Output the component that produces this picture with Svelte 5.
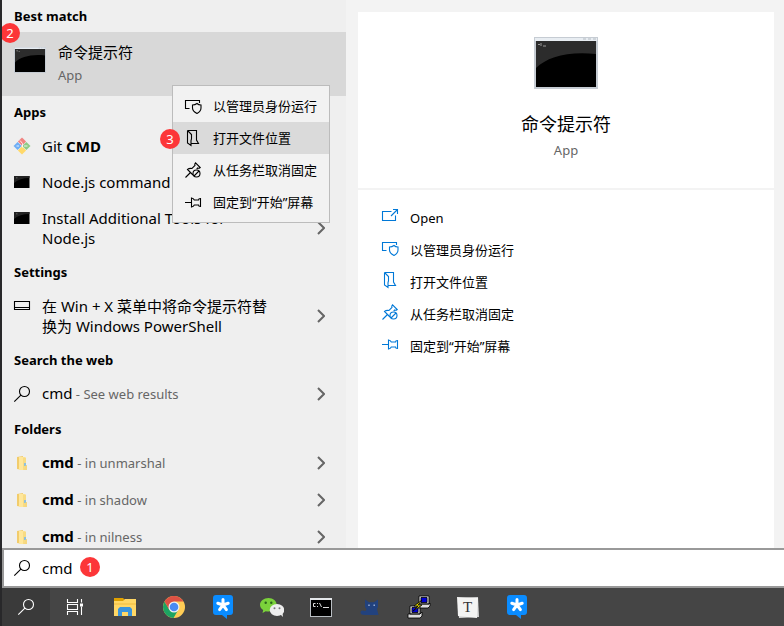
<script>
  let query = $state('cmd');

  const groups = [
    {
      title: 'Apps',
      rows: [
        { icon: 'git', pre: 'Git ', bold: 'CMD' },
        { icon: 'console', pre: 'Node.js command prompt' },
        { icon: 'console', pre: 'Install Additional Tools for Node.js', wrap: true, more: true }
      ]
    },
    {
      title: 'Settings',
      rows: [{ icon: 'taskbar', pre: '在 Win + X 菜单中将命令提示符替换为 Windows PowerShell', wrap: true, more: true }]
    },
    {
      title: 'Search the web',
      tall: true,
      rows: [{ icon: 'search', pre: 'cmd', note: ' - See web results', more: true }]
    },
    {
      title: 'Folders',
      tall: true,
      rows: [
        { icon: 'folder', bold: 'cmd', note: ' - in unmarshal', more: true },
        { icon: 'folder', bold: 'cmd', note: ' - in shadow', more: true },
        { icon: 'folder', bold: 'cmd', note: ' - in nilness', more: true }
      ]
    }
  ];

  const menu = [
    { icon: 'admin', label: '以管理员身份运行' },
    { icon: 'location', label: '打开文件位置' },
    { icon: 'unpin', label: '从任务栏取消固定' },
    { icon: 'pin', label: '固定到“开始”屏幕' }
  ];
  const actions = [{ icon: 'open', label: 'Open' }, ...menu];

  const taskbar = [
    ['search', 'Search'],
    ['taskview', 'Task View'],
    ['explorer', 'File Explorer'],
    ['chrome', 'Chrome'],
    ['star', 'TIM'],
    ['wechat', 'WeChat'],
    ['cmd', 'Command Prompt'],
    ['cat', 'Clash'],
    ['putty', 'PuTTY'],
    ['typora', 'Typora'],
    ['star', 'TIM']
  ];
</script>

{#snippet glyph(name)}
  <svg class="glyph" viewBox="0 0 16 16" aria-hidden="true">
    {#if name === 'open'}
      <path d="M9.500 3.500h-9v9h13V7.500M9 8l6-6M11 1.500h4.500V6" />
    {:else if name === 'admin'}
      <path d="M4.500 10.500h-4v-8h14v2.500M12 5.500c-1.300 1-2.600 1.500-4.500 1.500v3c0 2.200 1.700 4 4.500 5.500 2.800-1.500 4-3.300 4-5.500V7c-1.500 0-3-.5-4-1.500z" />
    {:else if name === 'location'}
      <path d="M2.500.5h9v9.500l2 3.500H6.500M2.500.5v12.500l3.500 2.500V11c0-1 .5-1.500.5-2.500V4.500L2.500.5" />
    {:else if name === 'unpin'}
      <path d="M.5 15.500l5-5M8 13L2.500 7.500c1.500-1.300 3-1.300 4.500-1l3-3C9.500 2.500 9.800 1.500 10.500.8l4.700 4.700c-.8.700-1.600.9-2.500.5l-1 1" />
      <circle cx="11.500" cy="11.500" r="3.500" /><path d="M9 14l5-5" />
    {:else if name === 'pin'}
      <path d="M0 8.500h6M6.500 4v9c1.500-.2 2.300-1 2.800-2h4.200c0 .8.600 1.500 2 1.500V4.500c-1.400 0-2 .7-2 1.500H9.300c-.5-1-1.300-1.800-2.800-2z" />
    {:else if name === 'search'}
      <circle cx="10.500" cy="5.500" r="5" /><path d="M6.900 9.100L.3 15.700" />
    {:else if name === 'taskbar'}
      <path d="M.5 3.500h15v8H.5zM.5 9.500h15" />
    {:else if name === 'taskview'}
      <path d="M.5 0v3.500h10V0M.5 16v-3.500h10V16M.5 5.500h10v5H.5zM14.500 0v3.500M14.500 7.500V16" /><path class="dot" d="M13 4.500h3v3h-3z" />
    {:else if name === 'git'}
      <g transform="rotate(45 8 8)" stroke="none">
        <rect x="2" y="2" width="5.800" height="5.800" fill="#f18482" />
        <rect x="8.200" y="2" width="5.800" height="5.800" fill="#8ecb86" />
        <rect x="2" y="8.200" width="5.800" height="5.800" fill="#6faef5" />
        <rect x="8.200" y="8.200" width="5.800" height="5.800" fill="#ffd96a" />
      </g>
      <path stroke="#fff" stroke-width=".8" d="M6 2.500l2.500 3v4M2.500 8h2.500M10 8h3.500" />
    {:else if name === 'console'}
      <g stroke="none"><path fill="#000" d="M0 2h15.500v12H0z" /><path fill="#222" d="M0 2h15.500v2C9 4 4 5.500 0 9z" /><path fill="#777" d="M2 3.500h1.500v.8H2z" /></g>
    {:else if name === 'folder'}
      <g stroke="none"><path fill="#f2cc6b" d="M3 2l6-1v14l-6-1z" /><path fill="#ffe79b" d="M5 2h6v13H5z" /><path fill="#f8db83" d="M9 2.500h3V15H9z" /><path fill="#8fc0dc" d="M10 8h2v3h-2z" /><path fill="#f5d780" d="M12 10h1v5h-3z" /></g>
    {/if}
  </svg>
{/snippet}

{#snippet consoleArt(cls)}
  <svg class={cls} viewBox="0 0 64 52" aria-hidden="true">
    <path fill="#c6ccd3" d="M0 0h64v52H0z" />
    <path fill="#e8edf2" d="M1 1h62v3H1z" />
    <path fill="#b4bbc2" d="M49 1.500h3v1h-3zM54 1.500h3v1h-3zM59 1.500h3v1h-3z" />
    <path fill="#000" d="M2 4h60v46H2z" />
    <path fill="#2c2c2c" d="M2 4h60v13C34 14 13 20 2 31z" />
    <path stroke="#999" fill="none" d="M4 7.500h2M7 6v3M9 9h3" />
  </svg>
{/snippet}

{#snippet appIcon(name)}
  {#if name === 'search' || name === 'taskview'}
    {@render glyph(name)}
  {:else}
    <svg class="app" viewBox="0 0 24 24" aria-hidden="true">
      {#if name === 'explorer'}
        <path fill="#dfa000" d="M1 3h9l2 2v3H1z" /><path fill="#ffd765" d="M1 6h9l2-2h11v17H1z" /><path fill="#f8c950" d="M1 8h22v2H1z" />
        <path fill="#3a94dc" d="M5 21v-7l2-2h10l2 2v7h-4v-4H9v4z" />
      {:else if name === 'chrome'}
        <circle cx="12" cy="12" r="11" fill="#fc5" /><path fill="#dd5144" d="M12 12L2.500 6.500A11 11 0 0 1 21.500 6.500H12z" />
        <path fill="#1da462" d="M2.500 6.500A11 11 0 0 0 11.500 23l5-8.500-4.500-2.500-4.700 2.600z" /><path fill="#dd5144" d="M2.500 6.500l4.800 8.300L12 12l1-5.500z" />
        <circle cx="12" cy="12" r="5.500" fill="#f1f1f1" /><circle cx="12" cy="12" r="4.300" fill="#4a8af4" />
      {:else if name === 'star'}
        <path fill="#0a8cff" d="M5 0h14a3 3 0 0 1 3 3v14a3 3 0 0 1-3 3h-3v4l-5-4H5a3 3 0 0 1-3-3V3a3 3 0 0 1 3-3z" />
        <path stroke="#fff" stroke-width="3" stroke-linecap="round" d="M12 10V4.500M12 10L6.800 8.300M12 10l5.200-1.700M12 10l-3.400 4.600M12 10l3.400 4.600" />
      {:else if name === 'wechat'}
        <path fill="#7bd23b" d="M8.500 3C3.800 3 0 6 0 9.800c0 2.200 1.200 4 3.200 5.200L2.500 18l3.200-1.700c1 .2 2 .3 3 .3 4.600-.2 8-3 8-6.800S13.200 3 8.500 3z" />
        <ellipse cx="17" cy="15" rx="7.300" ry="6" fill="#eee" /><path fill="#eee" d="M20 19l3 3-.5-4z" />
        <circle cx="5.700" cy="7.800" r="1.200" fill="#2a661b" /><circle cx="11.300" cy="7.800" r="1.200" fill="#2a661b" /><circle cx="14.500" cy="13.300" r="1" fill="#777" /><circle cx="19.500" cy="13.300" r="1" fill="#777" />
      {:else if name === 'cmd'}
        <path fill="#b9bec3" d="M1 3h22v19H1z" /><path fill="#e4e7ea" d="M1 3h22v2H1z" /><path d="M2 5h20v16H2z" /><path stroke="#ddd" fill="none" d="M6.500 8.500h-2v3h2M8.500 8v1M8.500 11v1M10.500 8l2 4M14 12.500h6" />
      {:else if name === 'cat'}
        <path fill="#22427e" d="M7 4.500l4 2.800h5L20 4.500V12l-1 2 1.500 6H7c-3 0-4.500-.8-4.500-2.500S4 15 5.500 15.700L7.500 16l1-2L7 12z" /><path fill="#9fb4d8" d="M10.300 9.500h1.400v1.400h-1.400zM15.500 9.500h1.400v1.400h-1.400z" />
      {:else if name === 'putty'}
        <g stroke="#000" stroke-width=".8"><path fill="#ddd" d="M12 1h10v8H12zM10 9h12l1-1v3l-2 2H10zM3 11h10v8H3zM1 19h12l2-2v4l-2 2H1z" /><path fill="#0000d4" d="M14 2.500h6v5h-6zM5 12.500h6v5H5z" /><path fill="#ffef00" d="M15 5l-8 6h4l-5 5 9-6h-4z" /></g>
      {:else if name === 'typora'}
        <path fill="#d5d5d5" d="M2 3l20-1 1 20-20 1z" /><path fill="#f4f4f3" d="M1 2l21 1-1 20L2 21z" /><text x="11.500" y="17" text-anchor="middle">T</text>
      {/if}
    </svg>
  {/if}
{/snippet}

<div class="screen">
  <main>
    <section class="results" aria-label="Results">
      <h2>Best match</h2>
      <button class="best">
        {@render consoleArt('best-art')}
        <span class="best-text"><span class="best-name">命令提示符</span><span class="kind">App</span></span>
      </button>
      {#each groups as group}
        <h2>{group.title}</h2>
        {#each group.rows as row}
          <button class="row" class:tall={group.tall} class:wrap={row.wrap}>
            {@render glyph(row.icon)}
            <span class="name">{row.pre ?? ''}{#if row.bold}<b>{row.bold}</b>{/if}{#if row.note}<small>{row.note}</small>{/if}</span>
            {#if row.more}
              <svg class="chevron" viewBox="0 0 8 14" aria-hidden="true"><path d="M1 1l6 6-6 6" /></svg>
            {/if}
          </button>
        {/each}
      {/each}
    </section>

    <section class="preview" aria-label="Preview">
      <div class="card">
        <header>
          {@render consoleArt('hero')}
          <h1>命令提示符</h1>
          <p>App</p>
        </header>
        <div class="actions">
          {#each actions as action}
            <button>{@render glyph(action.icon)}<span>{action.label}</span></button>
          {/each}
        </div>
      </div>
    </section>

    <div class="menu" role="menu">
      {#each menu as item, i}
        <button role="menuitem" class:active={i === 1}>{@render glyph(item.icon)}<span>{item.label}</span></button>
      {/each}
      <span class="badge third">3</span>
    </div>
    <span class="badge second">2</span>
  </main>

  <label class="searchbox">
    {@render glyph('search')}
    <input type="text" aria-label="Search" bind:value={query} />
    <span class="badge first">1</span>
  </label>

  <nav>
    {#each taskbar as [icon, label], i}
      <button class:current={i === 0} aria-label={label}>{@render appIcon(icon)}</button>
    {/each}
  </nav>
</div>

<style>
  :global(body) { margin: 0; }
  .screen {
    box-sizing: border-box;
    height: 100vh;
    display: flex;
    flex-direction: column;
    border-left: 2px solid #28282a;
    overflow: hidden;
    font-family: "Noto Sans", "Noto Sans CJK SC", sans-serif;
    font-size: 15px;
    color: #000;
    background: #f3f3f3;
  }
  button {
    font: inherit;
    color: inherit;
    border: 0;
    padding: 0;
    background: none;
    text-align: left;
  }
  svg { flex: none; display: block; }
  .glyph {
    width: 16px;
    height: 16px;
    overflow: visible;
    fill: none;
    stroke: currentColor;
    stroke-width: 1.1;
  }
  .glyph .dot { fill: currentColor; stroke: none; }
  main { position: relative; flex: 1; min-height: 0; display: flex; }
  .results {
    width: 344px;
    flex: none;
    background: #efefef;
    overflow: hidden;
  }
  h2 {
    margin: 0;
    padding-left: 12px;
    font-size: 13px;
    font-weight: 700;
    line-height: 32px;
  }
  .best {
    display: flex;
    align-items: center;
    gap: 12px;
    width: 100%;
    height: 64px;
    padding: 0 12px;
    background: #d8d8d8;
  }
  :global(.best-art) { width: 32px; height: 26px; margin-bottom: 8px; }
  .best-text { display: flex; flex-direction: column; }
  .best-name { line-height: 22px; }
  .kind { font-size: 13px; line-height: 24px; color: #666; }
  .row {
    display: flex;
    align-items: center;
    gap: 12px;
    width: 100%;
    height: 36px;
    padding: 0 21px 0 12px;
    white-space: nowrap;
  }
  .row.tall { height: 37px; padding-bottom: 2px; }
  .row.wrap { height: 56px; white-space: normal; }
  .row.wrap .glyph { align-self: flex-start; margin-top: 10px; }
  .name { width: 236px; line-height: 20px; }
  small { font-size: 13px; color: #666; white-space: pre; }
  .chevron {
    width: 8px;
    height: 14px;
    margin-left: auto;
    fill: none;
    stroke: #666;
    stroke-width: 2;
  }
  .preview { flex: 1; padding: 12px 10px 0 12px; }
  .card { height: 100%; background: #fff; }
  header {
    display: flex;
    flex-direction: column;
    align-items: center;
    padding: 25px 0 26px;
    border-bottom: 2px solid #f3f3f3;
  }
  :global(.hero) { width: 64px; height: 52px; margin-bottom: 21px; }
  h1 { margin: 0; font-size: 18px; font-weight: 400; line-height: 28px; }
  p { margin: 0; font-size: 13px; line-height: 24px; color: #666; }
  .actions { display: flex; flex-direction: column; padding: 12px 24px; font-size: 13px; line-height: 20px; }
  .actions button, .menu button { display: flex; align-items: center; gap: 12px; height: 32px; }
  .actions .glyph { color: #0078d7; margin-bottom: 4px; }
  .menu {
    position: absolute;
    left: 170px;
    top: 85px;
    display: flex;
    flex-direction: column;
    padding: 4px 0;
    border: 1px solid #bcbcbc;
    background: #f2f2f2;
    font-size: 13px;
    line-height: 20px;
  }
  .menu button { padding: 0 12px; white-space: nowrap; }
  .menu .active { background: #dadada; }
  .badge {
    position: absolute;
    width: 20px;
    border-radius: 50%;
    background: #fc3638;
    color: #fff;
    font-size: 13px;
    line-height: 20px;
    text-align: center;
  }
  .first { left: 76px; top: 7px; }
  .second { left: -2px; top: 23px; }
  .third { left: -13px; top: 43px; }
  .searchbox {
    position: relative;
    box-sizing: border-box;
    display: flex;
    align-items: center;
    gap: 12px;
    height: 40px;
    padding-left: 10px;
    border: 2px solid #999;
    border-right: 0;
    background: #fff;
  }
  input {
    flex: 1;
    min-width: 0;
    padding: 0;
    border: 0;
    outline: 0;
    background: none;
    font: inherit;
  }
  nav { display: flex; gap: 1px; height: 38px; background: #454545; color: #fff; }
  nav button { width: 48px; display: flex; align-items: center; justify-content: center; }
  nav .current { background: #3a3a3a; }
  .app { width: 24px; height: 24px; margin-left: 2px; }
  .app text { font-family: "Liberation Serif", serif; font-size: 15px; fill: #333; }
</style>
